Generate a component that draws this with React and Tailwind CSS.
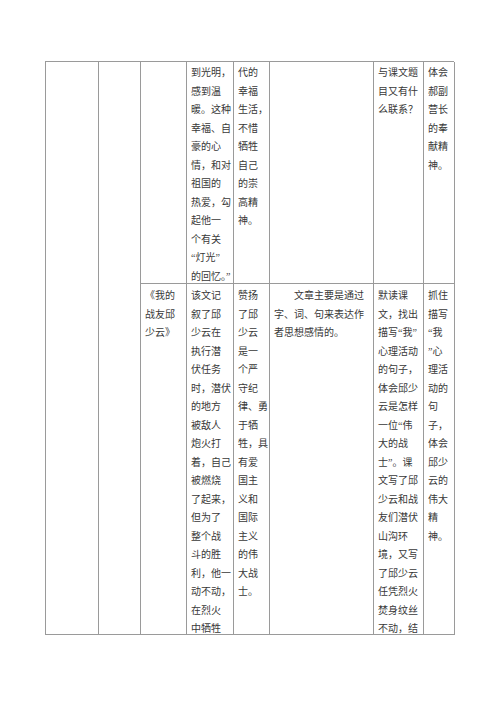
import React from 'react';

const font = { fontFamily: '"Liberation Serif", "Noto Sans CJK SC", serif' };

const Lines = ({ lines }) => (
  <div>
    {lines.map((l, i) => (
      <div key={i} className="whitespace-nowrap">{l}</div>
    ))}
  </div>
);

const Cell = ({ lines, className = '' }) => (
  <div className={`border-r border-b border-[#9a9a9a] pl-[4px] pt-[2px] overflow-hidden ${className}`}>
    {lines && <Lines lines={lines} />}
  </div>
);

const App = () => {
  return (
    <div className="w-[500px] h-[707px] bg-white pt-[61px] pl-[45px] text-[10px] leading-[18.5px] text-[#383838]" style={font}>
      <div className="grid grid-cols-[53px_42px_46px_47px_36px_104px_50px_31px] grid-rows-[222px_351px] border-l border-t border-[#9a9a9a] w-[409px]">
        <Cell className="row-span-2" />
        <Cell className="row-span-2" />

        {/* 第一行 */}
        <Cell />
        <Cell lines={['到光明，', '感到温', '暖。这种', '幸福、自', '豪的心', '情，和对', '祖国的', '热爱，勾', '起他一', '个有关', '“灯光”', '的回忆。”']} />
        <Cell lines={['代的', '幸福', '生活，', '不惜', '牺牲', '自己', '的崇', '高精', '神。']} />
        <Cell />
        <Cell lines={['与课文题', '目又有什', '么联系？']} />
        <Cell lines={['体会', '郝副', '营长', '的奉', '献精', '神。']} />

        {/* 第二行 */}
        <Cell className="pt-[3px]" lines={['《我的', '战友邱', '少云》']} />
        <Cell className="pt-[3px]" lines={['该文记', '叙了邱', '少云在', '执行潜', '伏任务', '时，潜伏', '的地方', '被敌人', '炮火打', '着，自己', '被燃烧', '了起来，', '但为了', '整个战', '斗的胜', '利，他一', '动不动，', '在烈火', '中牺牲']} />
        <Cell className="pt-[3px]" lines={['赞扬', '了邱', '少云', '是一', '个严', '守纪', '律、勇', '于牺', '牲，具', '有爱', '国主', '义和', '国际', '主义', '的伟', '大战', '士。']} />
        <Cell className="pt-[3px]" lines={['\u3000\u3000文章主要是通过', '字、词、句来表达作', '者思想感情的。']} />
        <Cell className="pt-[3px]" lines={['默读课', '文，找出', '描写“我”', '心理活动', '的句子，', '体会邱少', '云是怎样', '一位“伟', '大的战', '士”。课', '文写了邱', '少云和战', '友们潜伏', '山沟环', '境，又写', '了邱少云', '任凭烈火', '焚身纹丝', '不动，结']} />
        <Cell className="pt-[3px]" lines={['抓住', '描写', '“我', '”心', '理活', '动的', '句', '子，', '体会', '邱少', '云的', '伟大', '精', '神。']} />
      </div>
    </div>
  );
};

export default App;
